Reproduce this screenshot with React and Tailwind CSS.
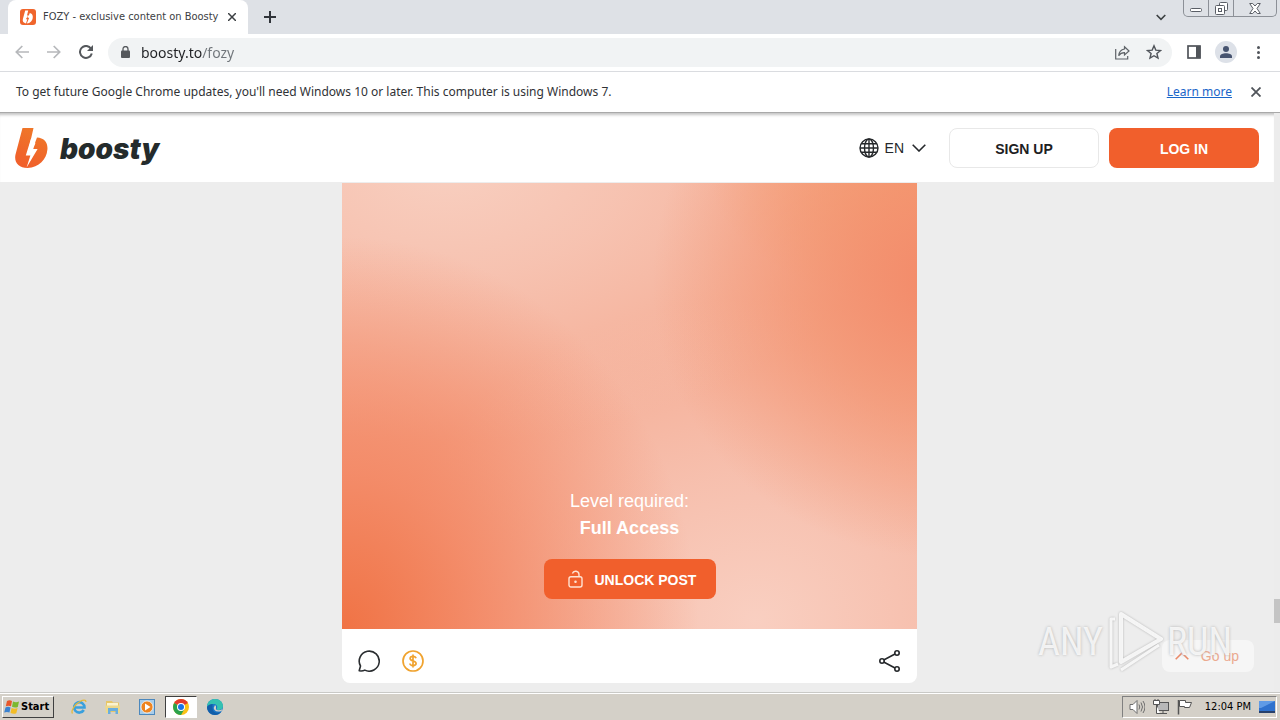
import React from "react";

const UI = "font-['DejaVu_Sans_Condensed','DejaVu_Sans',sans-serif]";
const UI_WIDE = "font-['Noto_Sans','Open_Sans',sans-serif]";

function BoostyMark({ className }) {
  return (
    <svg className={className} viewBox="0 0 33 40" aria-hidden="true">
      <defs>
        <linearGradient id="flame" x1="0.6" y1="0" x2="0.2" y2="1">
          <stop offset="0" stopColor="#ef7829" />
          <stop offset="0.7" stopColor="#f0642a" />
          <stop offset="1" stopColor="#f15f2c" />
        </linearGradient>
      </defs>
      <path
        fill="url(#flame)"
        d="M7.500 0H18.500L14.500 17.600H19.500L17.800 21.500H22.200L12.500 40C3.500 40-1.200 34 .5 26.500zM11 27.500H15.800L12 38.500 21.800 21.500H17.500L22 9.500C29 10 33 14 32.400 21.500 31.600 31.500 24 39.500 12.500 40z"
      />
      <path fill="#fff" d="M16.200 10L10.800 27.500H15.400L11.600 39.500 22.600 21H18.200L20.400 15z" />
    </svg>
  );
}

function Favicon() {
  return (
    <svg className="size-4" viewBox="0 0 16 16" aria-hidden="true">
      <rect width="16" height="16" rx="3" fill="#f0652c" />
      <path
        fill="#fff"
        d="M5.200 1.500h3L7 6.500h1.800l1-2.600c1.900.4 3 1.700 3 3.800 0 3.800-2.600 6.600-6 6.800L9.200 8.800H7.600l.6-2.200-2.400 3.600h1.500l-1.300 4.200C3.500 14 2.200 12.300 2.900 10z"
      />
    </svg>
  );
}

function WindowTab() {
  return (
    <div className="flex h-[34px] shrink-0 bg-[#dee1e6]">
      <div className="ml-2 flex w-60 items-center rounded-t-lg bg-white pl-3 pr-2">
        <Favicon />
        <span className={`ml-[7px] flex-1 whitespace-nowrap text-[11px] text-[#3c4043] ${UI}`}>
          FOZY - exclusive content on Boosty
        </span>
        <button type="button" aria-label="Close tab" className="flex size-4 items-center justify-center">
          <svg className="size-2" viewBox="0 0 8 8" stroke="#3c4043" strokeWidth="1.500">
            <path d="M0 0l8 8M8 0L0 8" />
          </svg>
        </button>
      </div>
      <button type="button" aria-label="New tab" className="ml-3 flex w-5 items-center justify-center">
        <svg className="size-3" viewBox="0 0 12 12" stroke="#30343a" strokeWidth="2">
          <path d="M6 0v12M0 6h12" />
        </svg>
      </button>
      <button type="button" aria-label="Search tabs" className="ml-auto mr-3 flex w-5 items-center justify-center">
        <svg className="h-[7px] w-[10px]" viewBox="0 0 10 7" fill="none" stroke="#3c4043" strokeWidth="1.600">
          <path d="M.7 1L5 5.300 9.300 1" />
        </svg>
      </button>
      <div className="mr-[3px] flex h-[17px] divide-x divide-[#8c9097] rounded-b-[5px] border border-t-0 border-[#8c9097]">
        <button type="button" aria-label="Minimize" className="flex w-[25px] items-center justify-center pt-1">
          <svg className="h-1 w-3" viewBox="0 0 12 4" fill="#fff" stroke="#5a5e66">
            <rect x=".5" y=".5" width="11" height="3" rx="1" />
          </svg>
        </button>
        <button type="button" aria-label="Restore" className="flex w-[25px] items-center justify-center">
          <svg className="size-[13px]" viewBox="0 0 13 13" fill="#fff" stroke="#5a5e66">
            <rect x="4.500" y=".5" width="8" height="8" rx="1" />
            <rect x=".5" y="3.500" width="9" height="9" rx="1" />
            <rect x="3.500" y="6.500" width="3" height="3" />
          </svg>
        </button>
        <button type="button" aria-label="Close" className="flex w-[42px] items-center justify-center">
          <svg className="h-[11px] w-3" viewBox="0 0 12 11" fill="#fff" stroke="#5a5e66">
            <path d="M.7.5h3L6 3l2.300-2.500h3L8 5.500l3.300 5h-3L6 8l-2.300 2.500h-3L4 5.500z" />
          </svg>
        </button>
      </div>
    </div>
  );
}

function Toolbar() {
  return (
    <div className="flex h-[38px] shrink-0 items-center border-b border-[#dadce0] bg-white pb-px">
      <button type="button" aria-label="Back" className="ml-[14px] flex size-4 items-center justify-center">
        <svg className="size-[14px]" viewBox="0 0 14 14" fill="none" stroke="#b6b8bb" strokeWidth="1.700">
          <path d="M14 7H1.500M7.300 1L1.300 7l6 6" />
        </svg>
      </button>
      <button type="button" aria-label="Forward" className="ml-4 flex size-4 items-center justify-center">
        <svg className="size-[14px]" viewBox="0 0 14 14" fill="none" stroke="#b6b8bb" strokeWidth="1.700">
          <path d="M0 7h12.500M6.700 1l6 6-6 6" />
        </svg>
      </button>
      <button type="button" aria-label="Reload" className="ml-4 flex size-4 items-center justify-center">
        <svg className="size-[14px]" viewBox="0 0 14 14" fill="none" stroke="#55585c" strokeWidth="2">
          <path d="M12 3.600A6 6 0 1 0 12.800 8.500" />
          <path d="M14 0v6H8z" fill="#55585c" stroke="none" />
        </svg>
      </button>
      <div className="ml-[14px] flex h-[29px] flex-1 items-center rounded-full bg-[#f1f3f4] pl-[13px] pr-[10px]">
        <svg className="h-3 w-[9px]" viewBox="0 0 9 12" fill="#55585c" aria-hidden="true">
          <rect y="4.500" width="9" height="7.500" rx="1" />
          <path d="M2 5V3a2.500 2.500 0 0 1 5 0v2" fill="none" stroke="#55585c" strokeWidth="1.300" />
        </svg>
        <input
          aria-label="Address"
          defaultValue="boosty.to/fozy"
          className={`ml-[11px] min-w-0 flex-1 bg-[linear-gradient(to_right,#202124_61px,#70757a_61px)] bg-clip-text text-[14px] text-transparent outline-none ${UI_WIDE}`}
        />
        <button type="button" aria-label="Share" className="flex size-4 items-center justify-center">
          <svg className="size-[15px]" viewBox="0 0 15 15" fill="none" stroke="#5f6368" strokeWidth="1.200">
            <path d="M.7 4v10h12v-3" />
            <path d="M9.500 1.800L14 6l-4.500 4V7.700C6.500 7.700 5 8.700 3.700 10.700 4 7.300 6 4.500 9.500 4z" />
          </svg>
        </button>
        <button type="button" aria-label="Bookmark" className="ml-4 flex size-4 items-center justify-center">
          <svg className="size-4" viewBox="0 0 16 16" fill="none" stroke="#50545a" strokeWidth="1.400">
            <path d="M8 1.800l1.800 4.300 4.700.4-3.600 3 1.100 4.600L8 11.700l-4 2.400 1.100-4.600-3.600-3 4.700-.4z" />
          </svg>
        </button>
      </div>
      <button type="button" aria-label="Side panel" className="ml-[14px] flex size-4 items-center justify-center">
        <svg className="size-[14px]" viewBox="0 0 14 14">
          <rect x="1" y="1" width="12" height="12" fill="#fff" stroke="#50545a" strokeWidth="1.700" />
          <rect x="9" y="1" width="4.500" height="12" fill="#50545a" />
        </svg>
      </button>
      <button type="button" aria-label="Profile" className="ml-[13px] flex size-[22px] items-center justify-center rounded-full bg-[#dde1e8]">
        <svg className="size-3" viewBox="0 0 12 12" fill="#46536f">
          <circle cx="6" cy="3" r="3" />
          <path d="M0 12v-1.500C0 8.300 3 7.300 6 7.300s6 1 6 3.200V12z" />
        </svg>
      </button>
      <button type="button" aria-label="Menu" className="ml-[13px] mr-[14px] flex size-4 items-center justify-center">
        <svg className="h-[13px] w-[3px]" viewBox="0 0 3 13" fill="#50545a">
          <circle cx="1.500" cy="1.500" r="1.500" />
          <circle cx="1.500" cy="6.500" r="1.500" />
          <circle cx="1.500" cy="11.500" r="1.500" />
        </svg>
      </button>
    </div>
  );
}

function UpdateNotice() {
  return (
    <div className={`flex h-[41px] shrink-0 items-center border-b border-[#a9a9a9] bg-white px-4 text-[12px] text-[#303236] ${UI_WIDE}`}>
      <p className="flex-1">
        To get future Google Chrome updates, you'll need Windows 10 or later. This computer is using Windows 7.
      </p>
      <a href="#learn" className="text-[#1a66c9] underline">
        Learn more
      </a>
      <button type="button" aria-label="Dismiss" className="ml-4 flex size-4 items-center justify-center">
        <svg className="size-[10px]" viewBox="0 0 10 10" stroke="#50545a" strokeWidth="1.800">
          <path d="M.5.5l9 9M9.500.5l-9 9" />
        </svg>
      </button>
    </div>
  );
}

function SiteHeader() {
  return (
    <header className="flex h-[69px] items-center bg-white pl-[15px] pr-[15px] shadow-[inset_0_4px_3px_-2px_#c4c4c4]">
      <a href="#home" className="flex items-center" aria-label="Boosty home">
        <BoostyMark className="h-10 w-[33px]" />
        <span className="ml-3 pt-[2px] font-['Inter',sans-serif] text-[28px] font-black italic leading-[38px] text-[#242b2c]">
          boosty
        </span>
      </a>
      <button type="button" className="ml-auto flex items-center text-[14px] text-[#25282b]">
        <svg className="size-5" viewBox="0 0 20 20" fill="none" stroke="#25282b" strokeWidth="1.400">
          <circle cx="10" cy="10" r="9" />
          <ellipse cx="10" cy="10" rx="4.500" ry="9" />
          <path d="M10 1v18M1 10h18M2.300 5.800h15.400M2.300 14.200h15.400" />
        </svg>
        <span className="ml-[6px] pt-[2px]">EN</span>
        <svg className="ml-2 h-2 w-[14px]" viewBox="0 0 14 8" fill="none" stroke="#25282b" strokeWidth="1.600">
          <path d="M.7.8L7 7 13.300.8" />
        </svg>
      </button>
      <button type="button" className="ml-[23px] h-10 w-[150px] rounded-lg border border-[#e8e8e8] bg-white pt-[3px] text-[14px] font-bold text-[#1d2022]">
        SIGN UP
      </button>
      <button type="button" className="ml-[10px] h-10 w-[150px] rounded-lg bg-[#f15f2c] pt-[3px] text-[14px] font-bold text-white">
        LOG IN
      </button>
    </header>
  );
}

function LockedPost() {
  return (
    <article className="w-full max-w-[575px] overflow-hidden rounded-b-lg bg-white">
      <div className="flex min-h-[446px] flex-col items-center justify-end bg-[#f5ab92] bg-[radial-gradient(ellipse_62%_88%_at_0%_100%,#f07345_0%,#f3845fcc_40%,#f5ab9200_100%),radial-gradient(ellipse_50%_62%_at_104%_22%,#f38a69_0%,#f3936fb3_45%,#f5ab9200_100%),radial-gradient(ellipse_40%_30%_at_104%_-2%,#f6a370_0%,#f5ab9200_100%),radial-gradient(ellipse_80%_62%_at_18%_-4%,#f8cfc0_0%,#f7c8b8cc_40%,#f5ab9200_100%),radial-gradient(ellipse_66%_72%_at_72%_98%,#f9cfc1_0%,#f7c5b5cc_45%,#f5ab9200_100%)] pb-[30px] text-white">
        <p className="text-[18px] leading-[27px]">Level required:</p>
        <p className="text-[18px] font-bold leading-[27px]">Full Access</p>
        <button type="button" className="mt-[17px] flex h-10 w-[172px] items-center rounded-lg bg-[#f15f2c] pl-6 text-[14px] font-bold">
          <svg className="h-[18px] w-[15px]" viewBox="0 0 15 18" fill="none" stroke="#ffe3d3" strokeWidth="1.400">
            <rect x="1" y="6.700" width="13" height="10.300" rx="2" />
            <path d="M11 6.700V4.500A3.400 3.400 0 0 0 4.400 3.500" />
            <circle cx="7.500" cy="11.800" r=".6" fill="#ffe3d3" />
          </svg>
          <span className="ml-3 pt-[2px]">UNLOCK POST</span>
        </button>
      </div>
      <div className="flex h-[54px] items-center px-4 pt-[10px]">
        <button type="button" aria-label="Comments">
          <svg className="size-[22px]" viewBox="0 0 22 22" fill="none" stroke="#2a2d30" strokeWidth="1.600">
            <path d="M1.200 20.800L2.500 16A10 10 0 1 1 6.800 20.100c-1.500.8-3.500 1-5.600.7z" strokeLinejoin="round" />
          </svg>
        </button>
        <button type="button" aria-label="Donate" className="ml-[22px]">
          <svg className="size-[22px]" viewBox="0 0 22 22" fill="none" stroke="#f0a32f" strokeWidth="1.700">
            <circle cx="11" cy="11" r="10" />
            <path d="M14 8.300C13.700 7 12.500 6.400 11 6.400c-1.700 0-2.900.8-2.900 2.200 0 3.200 6 1.500 6 4.700 0 1.500-1.300 2.300-3.100 2.300-1.700 0-2.900-.7-3.100-2.100M11 4.500v13" />
          </svg>
        </button>
        <button type="button" aria-label="Share post" className="ml-auto">
          <svg className="size-[22px]" viewBox="0 0 22 22" fill="none" stroke="#25282b" strokeWidth="1.600">
            <path d="M4.700 10L16 4M4.700 12L16 18" />
            <circle cx="3" cy="11" r="2.200" />
            <circle cx="18" cy="3" r="2.200" />
            <circle cx="18" cy="19" r="2.200" />
          </svg>
        </button>
      </div>
    </article>
  );
}

function Watermark() {
  return (
    <div className="pointer-events-none absolute bottom-[18px] right-[48px] flex items-center font-['Roboto_Condensed','Liberation_Sans_Narrow','Roboto',sans-serif] text-[38px] leading-[64px] text-white/80 [text-shadow:0_0_3px_#b0b0b0]">
      <span>ANY</span>
      <svg className="mx-1 h-16 w-[56px] drop-shadow-[0_0_1px_#a8a8a8]" viewBox="0 0 56 64" fill="none" stroke="#fff" strokeOpacity=".85" strokeWidth="4" strokeLinejoin="round">
        <path d="M14 4L54 29 14 52z" />
        <path d="M8 9H4v48l7-3M14 60l38-25" strokeWidth="3" />
      </svg>
      <span>RUN</span>
    </div>
  );
}

function TrayIcons() {
  return (
    <>
      <svg className="size-4" viewBox="0 0 16 16" fill="#fff" stroke="#6d6d6d">
        <path d="M1 5.500h3l4-4v13l-4-4H1z" />
        <path d="M10 5.500q1.500 2.500 0 5M12 3.500q3 4.500 0 9M14 2q4 6 0 12" fill="none" />
      </svg>
      <svg className="ml-2 size-4" viewBox="0 0 16 16" fill="#fff" stroke="#555">
        <rect x="4.500" y="3.500" width="11" height="8" fill="#b8b8b8" />
        <path d="M7 14.500h7M10 12v2M3.500 6v8.500H7" />
        <path d="M.5 1.500h6v4h-6zM2 0v2M5 0v2" />
      </svg>
      <svg className="ml-2 size-4" viewBox="0 0 16 16" fill="#fff" stroke="#555">
        <path d="M1.500 1v14.500" strokeWidth="1.500" />
        <path d="M2.500 1.500h6v2h6l-2 5h-5v-1h-5z" />
      </svg>
    </>
  );
}

const APP_BUTTON = "flex h-[22px] w-8 items-center justify-center";

function Taskbar() {
  return (
    <footer className={`flex h-[27px] shrink-0 items-center border-t border-white bg-[#d4d0c8] ${UI}`}>
      <button type="button" className="ml-[2px] flex h-[22px] w-[52px] items-center border border-b-[#404040] border-l-white border-r-[#404040] border-t-white pl-px text-[11px] font-bold text-black">
        <svg className="mr-px size-4 shrink-0" viewBox="0 0 16 16">
          <path d="M3 2q2.500-1.500 5 0L7 7.300Q4.500 6 1.800 7.300z" fill="#e8572a" />
          <path d="M9 2.500q3 1.500 6 0L13.800 8Q11 9.300 8 7.800z" fill="#7cb82f" />
          <path d="M1.500 8.500q2.500-1.500 5 0L5.500 13.500Q3 12.300.2 13.500z" fill="#3b82d0" />
          <path d="M7.600 9q3 1.500 6 0L12.300 14.300Q9.500 15.500 6.500 14z" fill="#f3bc25" />
        </svg>
        Start
      </button>
      <div className="ml-[9px] flex items-center gap-[2px]">
        <button type="button" aria-label="Internet Explorer" className={APP_BUTTON}>
          <svg className="size-4" viewBox="0 0 16 16" fill="none">
            <path d="M12.800 11A5.200 5.200 0 1 1 13.500 8.500H4" stroke="#3aa0dd" strokeWidth="2.600" />
            <path d="M1.500 14.500C-.5 12 4 5 9 2.500c3-1.600 6-2 6 .5" stroke="#e5b93b" strokeWidth="1.300" />
          </svg>
        </button>
        <button type="button" aria-label="Explorer" className={APP_BUTTON}>
          <svg className="size-4" viewBox="0 0 16 16">
            <path d="M1 2h6l1 1.500h6V13H1z" fill="#e7c667" />
            <path d="M2 4h11v3H2z" fill="#fbf3cf" />
            <path d="M0 6.500h15V14H11v-4H5v4H1z" fill="#ecd88d" />
            <path d="M3 15V9h10v6h-2.500v-3h-5v3z" fill="#6aaede" />
          </svg>
        </button>
        <button type="button" aria-label="Media Player" className={APP_BUTTON}>
          <svg className="size-4" viewBox="0 0 16 16">
            <rect x=".5" y=".5" width="15" height="15" fill="#a8cdea" stroke="#4c88bd" />
            <circle cx="8" cy="8" r="6" fill="#ee8420" stroke="#fff" strokeWidth=".7" />
            <path d="M6 4.500v7l5.500-3.500z" fill="#fff" />
          </svg>
        </button>
        <button type="button" aria-label="Chrome" className={`${APP_BUTTON} border border-b-white border-l-[#404040] border-r-white border-t-[#404040] bg-white`}>
          <svg className="size-4" viewBox="0 0 16 16">
            <circle cx="8" cy="8" r="8" fill="#fbc116" />
            <path d="M8 8L1.100 4A8 8 0 0 1 14.900 4z" fill="#e33b2e" />
            <path d="M8 8L1.100 4A8 8 0 0 0 8 16l3.500-6z" fill="#2ba24c" />
            <circle cx="8" cy="8" r="4" fill="#fff" />
            <circle cx="8" cy="8" r="3" fill="#1a73e8" />
          </svg>
        </button>
        <button type="button" aria-label="Edge" className={APP_BUTTON}>
          <svg className="size-4" viewBox="0 0 16 16">
            <circle cx="8" cy="8" r="8" fill="#1976c8" />
            <path d="M0 8C0 2 5 0 8 0c5 0 8 3.500 8 7 0 2.500-2 4-4.200 4-1.800 0-2.600-.8-1.800-1.800C11 7 9 5 6.500 5 3 5 .5 6.500 0 8z" fill="#35c1b1" />
            <path d="M5.500 9c0 4 3.500 6 8.500 4-1.500 2-3.500 3-6 3C4 16 0 13 0 8c1-2 3.500-3 6-3-1 1-.5 2.500-.5 4z" fill="#125ea9" />
            <path d="M8 6q1.500 1 1 2.500Q8.300 10.500 10 11q3 .8 5.500-1l-1 2q-5 1.500-7-1-1.500-2.500.5-5z" fill="#d4d0c8" />
          </svg>
        </button>
      </div>
      <div className="ml-auto mr-[3px] flex h-[22px] items-center border border-b-white border-l-[#808080] border-r-white border-t-[#808080] pl-[6px] pr-px text-black">
        <TrayIcons />
        <time className="ml-3 text-[11px]">12:04 PM</time>
        <svg className="ml-2 h-4 w-[16px]" viewBox="0 0 16 16">
          <path d="M0 2h16v10H0z" fill="#2f72ce" />
          <path d="M0 2h16L2 9H0z" fill="#5f9be6" />
          <path d="M0 12h16v2H0z" fill="#27406b" />
        </svg>
      </div>
    </footer>
  );
}

export default function App() {
  return (
    <div className="flex min-h-screen flex-col bg-[#ededed] font-['Liberation_Sans',Arial,sans-serif]">
      <WindowTab />
      <Toolbar />
      <UpdateNotice />
      <div className="relative flex flex-1">
        <div className="flex min-w-0 flex-1 flex-col">
          <SiteHeader />
          <main className="flex flex-1 items-start justify-center pb-[9px] pr-[15px] pt-px">
            <LockedPost />
          </main>
        </div>
        <div className="flex w-[6px] flex-col bg-[#ececec]" aria-hidden="true">
          <div className="grow-[7]" />
          <div className="h-6 bg-[#c4c4c4]" />
          <div className="grow" />
        </div>
        <button type="button" className="absolute bottom-[20px] right-[26px] flex h-8 items-center rounded-lg bg-white/50 pl-[13px] pr-[15px] text-[14px] text-[#eba98f]">
          <svg className="h-2 w-[14px]" viewBox="0 0 14 8" fill="none" stroke="#ea8a68" strokeWidth="1.600">
            <path d="M.7 7.200L7 1l6.300 6.200" />
          </svg>
          <span className="ml-3">Go up</span>
        </button>
        <Watermark />
      </div>
      <div className="h-px bg-[#c9c9c6]" />
      <Taskbar />
    </div>
  );
}
